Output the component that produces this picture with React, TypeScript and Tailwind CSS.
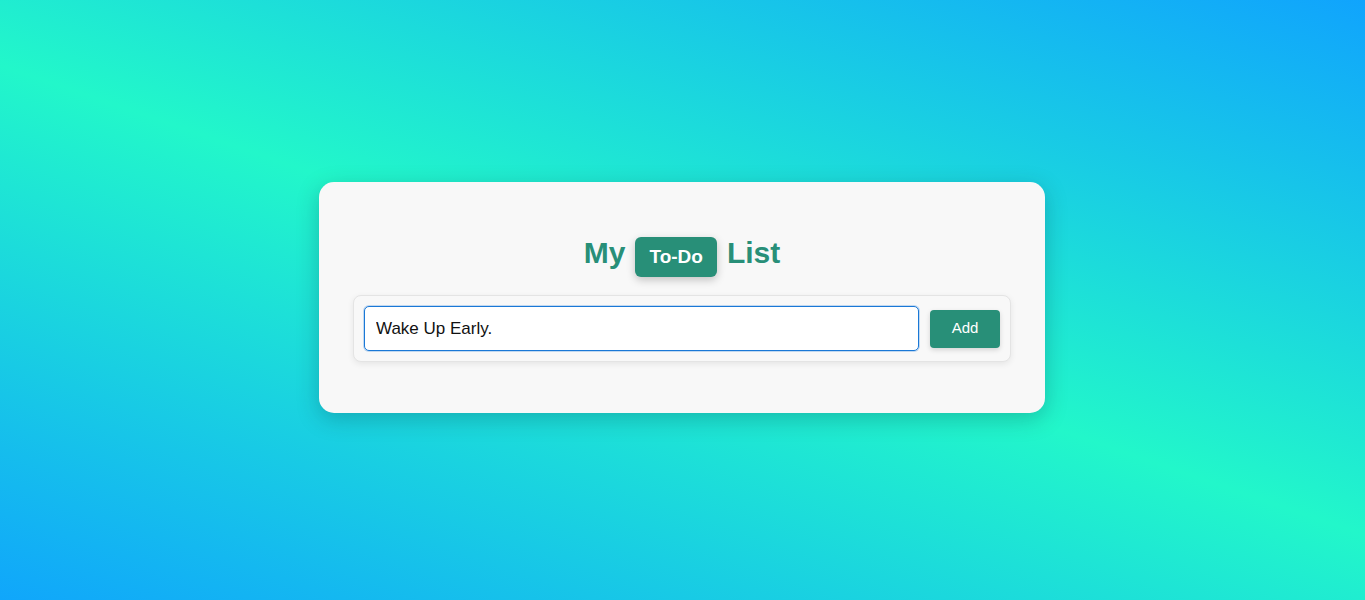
import React, { useEffect, useRef } from "react";

export default function App() {
  const ref = useRef<HTMLInputElement>(null);
  useEffect(() => {
    const el = ref.current;
    if (el) {
      el.focus();
      const n = el.value.length;
      el.setSelectionRange(n, n);
    }
  }, []);
  return (
    <div className="w-full h-[600px] flex items-center justify-center pr-[1px] pb-[5px] bg-[linear-gradient(19deg,#10a6fb,#22f7ca,#10a4fd)] font-['Liberation_Sans',Arial,sans-serif]">
      <div className="w-[726px] h-[231px] bg-[#f8f8f8] rounded-[15px] shadow-[0_6px_22px_rgba(0,40,60,0.25)] px-[34px] pt-[54px]">
        <h1 className="flex items-baseline justify-center gap-[10px] text-[30px] font-bold text-[#288f78] leading-[34px]">
          <span>My</span>
          <span className="inline-block bg-[#288f78] text-white text-[19px] leading-[22px] py-[9px] px-[14px] rounded-[6px] shadow-[0_3px_8px_rgba(0,0,0,0.22)]">
            To-Do
          </span>
          <span>List</span>
        </h1>
        <div className="mt-[18px] flex items-center gap-[11px] p-[10px] bg-[#f8f8f8] border border-[#e4e4e4] rounded-[8px] shadow-[0_2px_6px_rgba(0,0,0,0.08)]">
          <input
            ref={ref}
            defaultValue="Wake Up Early."
            className="flex-1 h-[45px] bg-white border border-[#1a78d6] rounded-[5px] px-[11px] text-[17px] text-[#111] outline-none shadow-[0_0_0_1px_rgba(26,120,214,0.25)] font-['Liberation_Sans',Arial,sans-serif]"
          />
          <button className="w-[70px] h-[38px] bg-[#288f78] text-white text-[15px] rounded-[4px] shadow-[0_2px_5px_rgba(0,0,0,0.15)] font-['Liberation_Sans',Arial,sans-serif]">
            Add
          </button>
        </div>
      </div>
    </div>
  );
}
